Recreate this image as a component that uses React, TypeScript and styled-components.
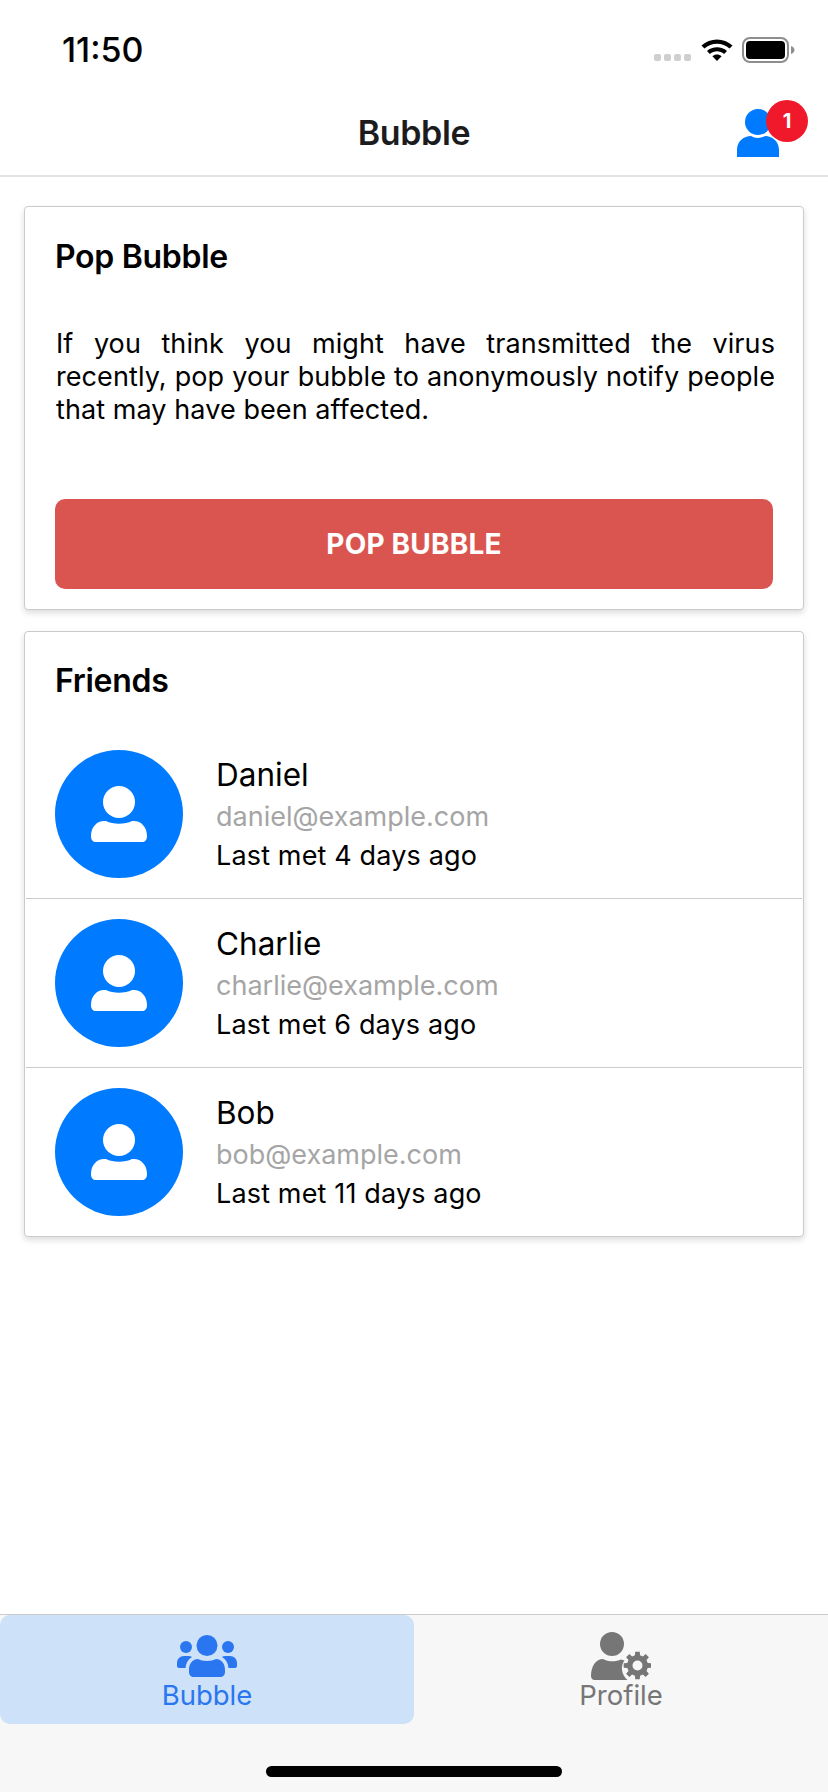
import styled, { createGlobalStyle } from 'styled-components';

const GlobalStyle = createGlobalStyle`
  html, body {
    margin: 0;
    padding: 0;
    background: #fff;
    font-family: Inter, "Noto Sans", "Liberation Sans", sans-serif;
  }
  * { box-sizing: border-box; }
`;

const Screen = styled.div`
  width: 828px;
  height: 1792px;
  display: flex;
  flex-direction: column;
  overflow: hidden;
  background: #fff;
`;

const StatusBar = styled.div`
  height: 88px;
  padding: 31px 32px 0 62px;
  display: flex;
  justify-content: space-between;
  align-items: flex-start;
`;

const Time = styled.div`
  font-size: 34px;
  line-height: 38px;
  font-weight: 500;
  color: #000;
`;

const StatusIcons = styled.div`
  margin-top: 6px;
  display: flex;
  align-items: flex-start;
`;

const SignalDots = styled.div`
  display: flex;
  gap: 3px;
  margin: 17px 10px 0 0;
`;

const SignalDot = styled.span`
  width: 7px;
  height: 7px;
  border-radius: 2px;
  background: #cfcfcf;
`;

const Header = styled.header`
  position: relative;
  height: 89px;
  display: flex;
  align-items: center;
  justify-content: center;
  border-bottom: 2px solid #e2e2e2;
`;

const Title = styled.h1`
  margin: 0 0 -2px;
  font-size: 34px;
  line-height: 40px;
  font-weight: 600;
  color: #1c1c1e;
  letter-spacing: -0.4px;
`;

const HeaderAction = styled.div`
  position: absolute;
  left: 737px;
  top: 21px;
  width: 42px;
  height: 48px;
`;

const Badge = styled.span`
  position: absolute;
  left: 29px;
  top: -9px;
  width: 42px;
  height: 42px;
  border-radius: 50%;
  background: #f0192b;
  color: #fff;
  font-size: 20px;
  font-weight: 700;
  display: flex;
  align-items: center;
  justify-content: center;
`;

const Main = styled.main`
  flex: 1;
  padding: 29px 24px 0;
  display: flex;
  flex-direction: column;
  gap: 21px;
`;

const Card = styled.section`
  border: 1px solid #cbcbcb;
  border-radius: 4px;
  background: #fff;
  box-shadow: 0 3px 6px rgba(0, 0, 0, 0.14);
`;

const PopBody = styled.div`
  height: 402px;
  padding: 32px 30px 0;
  display: flex;
  flex-direction: column;
`;

const CardTitle = styled.h2`
  margin: 0;
  font-size: 32px;
  line-height: 36px;
  font-weight: 600;
  color: #000;
  letter-spacing: -0.3px;
`;

const Description = styled.p`
  margin: 52px -2px 0 1px;
  font-size: 27px;
  line-height: 33px;
  letter-spacing: 0.08px;
  color: #000;
  text-align: justify;
`;

const PopButton = styled.button`
  margin-top: 73px;
  height: 90px;
  border: 0;
  border-radius: 10px;
  background: #da5550;
  color: #fff;
  font-family: inherit;
  font-size: 28px;
  font-weight: 700;
  letter-spacing: 0.2px;
`;

const FriendsHeading = styled.div`
  padding: 31px 30px 0;
  height: 98px;
`;

const FriendRow = styled.div<{ $last?: boolean }>`
  height: ${(p) => (p.$last ? 168 : 169)}px;
  margin: 0 1px;
  padding: 0 29px;
  display: flex;
  align-items: center;
  gap: 33px;
  border-bottom: ${(p) => (p.$last ? 'none' : '1px solid #cbcbcb')};
`;

const Avatar = styled.div`
  width: 128px;
  height: 128px;
  border-radius: 50%;
  background: #007bff;
  display: flex;
  align-items: center;
  justify-content: center;
  flex: none;
`;

const FriendInfo = styled.div`
  display: flex;
  flex-direction: column;
`;

const FriendName = styled.div`
  font-size: 31.5px;
  line-height: 42px;
  color: #000;
`;

const FriendEmail = styled.div`
  font-size: 27px;
  line-height: 42px;
  color: #a5a5a5;
`;

const FriendMet = styled.div`
  font-size: 27px;
  line-height: 36px;
  letter-spacing: 0.15px;
  color: #000;
`;

const TabBar = styled.nav`
  height: 178px;
  background: #f7f7f7;
  border-top: 1px solid #cbcbcb;
  display: flex;
  align-items: flex-start;
  position: relative;
`;

const Tab = styled.div<{ $active?: boolean }>`
  width: 414px;
  height: 109px;
  border-radius: 10px;
  display: flex;
  flex-direction: column;
  align-items: center;
  justify-content: flex-end;
  padding-bottom: 14px;
  background: ${(p) => (p.$active ? '#cde1f9' : 'transparent')};
  color: ${(p) => (p.$active ? '#2a76f0' : '#767676')};
`;

const TabIcon = styled.div<{ $gap: number }>`
  display: flex;
  margin-bottom: ${(p) => p.$gap}px;
`;

const TabLabel = styled.span`
  font-size: 27.5px;
  line-height: 30px;
`;

const HomeIndicator = styled.div`
  position: absolute;
  left: 266px;
  top: 151px;
  width: 296px;
  height: 11px;
  border-radius: 6px;
  background: #000;
`;

const friends = [
  { name: 'Daniel', email: 'daniel@example.com', met: 'Last met 4 days ago' },
  { name: 'Charlie', email: 'charlie@example.com', met: 'Last met 6 days ago' },
  { name: 'Bob', email: 'bob@example.com', met: 'Last met 11 days ago' },
];

const WifiIcon = () => (
  <svg width="32" height="24" viewBox="0 0 32 24">
    <path d="M0.5 8.5 C9 0.5 23 0.5 31.5 8.5 L28.6 11.6 C21.5 5 10.5 5 3.4 11.6 Z" fill="#000" />
    <path d="M6 14 C11.5 9 20.5 9 26 14 L23.1 17 C19 13.4 13 13.4 8.9 17 Z" fill="#000" />
    <path d="M11.4 19.2 C14 17 18 17 20.6 19.2 L16 24 Z" fill="#000" />
  </svg>
);

const BatteryIcon = () => (
  <svg width="54" height="26" viewBox="0 0 54 26" style={{ marginLeft: 9 }}>
    <rect x="1" y="1" width="45" height="24" rx="7" fill="none" stroke="#8e8e8e" strokeWidth="2" />
    <rect x="4" y="4" width="39" height="18" rx="4" fill="#000" />
    <path d="M49 9 C51.5 10 52.5 11.5 52.5 13 C52.5 14.5 51.5 16 49 17 Z" fill="#8e8e8e" />
  </svg>
);

const PersonIcon = () => (
  <svg width="42" height="48" viewBox="0 0 42 48">
    <circle cx="21" cy="13" r="13" fill="#007bff" />
    <path d="M0 48 V41 C0 32 7 27 14 27 C18 29.5 24 29.5 28 27 C35 27 42 32 42 41 V48 Z" fill="#007bff" />
  </svg>
);

const AvatarPerson = () => (
  <svg width="56" height="56" viewBox="0 0 56 56">
    <circle cx="28" cy="16" r="16" fill="#fff" />
    <path d="M0 50 C0 41 6 35 13 35 H15 C22 38.5 34 38.5 41 35 H43 C50 35 56 41 56 50 C56 54 54 56 51 56 H5 C2 56 0 54 0 50 Z" fill="#fff" />
  </svg>
);

const UsersIcon = () => (
  <svg width="60" height="42" viewBox="0 0 60 42" fill="#2a76f0">
    <circle cx="30" cy="10.5" r="10.5" />
    <circle cx="9" cy="12" r="6" />
    <circle cx="51" cy="12" r="6" />
    <path d="M12 35 C12 28 16 24 21 24 C25 26.5 35 26.5 39 24 C44 24 48 28 48 35 V37 C48 40 46 42 43 42 H17 C14 42 12 40 12 37 Z" />
    <path d="M0 31 V28 C0 24 3 21 7 21 H12 C13.5 21 15 22 15 22 C11 24.5 9 28 8.5 33 H2 C1 33 0 32 0 31 Z" />
    <path d="M60 31 V28 C60 24 57 21 53 21 H48 C46.5 21 45 22 45 22 C49 24.5 51 28 51.5 33 H58 C59 33 60 32 60 31 Z" />
  </svg>
);

const gearPath = () => {
  const cx = 46.5;
  const cy = 33.5;
  const teeth = 8;
  const points: string[] = [];
  for (let i = 0; i < teeth; i++) {
    const a = (i / teeth) * Math.PI * 2 - Math.PI / 2;
    const step = Math.PI / teeth;
    [
      [a - step * 0.42, 14],
      [a + step * 0.42, 14],
      [a + step * 0.62, 10.5],
      [a + step * 1.38, 10.5],
    ].forEach(([t, r]) => {
      points.push(`${(cx + Math.cos(t) * r).toFixed(2)} ${(cy + Math.sin(t) * r).toFixed(2)}`);
    });
  }
  const hole = `M${cx} ${cy - 5} A5 5 0 1 0 ${cx} ${cy + 5} A5 5 0 1 0 ${cx} ${cy - 5} Z`;
  return `M${points.join(' L')} Z ${hole}`;
};

const ProfileGearIcon = () => (
  <svg width="60" height="48" viewBox="0 0 60 48" fill="#767676">
    <circle cx="21" cy="12" r="12" />
    <path d="M0 44 C0 34 5 27 12 27 C17 30 25 30 30 27.5 L33.5 28.5 C31.5 31 30.5 35 31 38 C31.5 42 33.5 45.5 36.5 48 H4 C1 48 0 46 0 44 Z" />
    <path fillRule="evenodd" d={gearPath()} />
  </svg>
);

export default function App() {
  return (
    <Screen>
      <GlobalStyle />
      <StatusBar>
        <Time>11:50</Time>
        <StatusIcons>
          <SignalDots>
            <SignalDot />
            <SignalDot />
            <SignalDot />
            <SignalDot />
          </SignalDots>
          <WifiIcon />
          <BatteryIcon />
        </StatusIcons>
      </StatusBar>
      <Header>
        <Title>Bubble</Title>
        <HeaderAction>
          <PersonIcon />
          <Badge>1</Badge>
        </HeaderAction>
      </Header>
      <Main>
        <Card>
          <PopBody>
            <CardTitle>Pop Bubble</CardTitle>
            <Description>
              If you think you might have transmitted the virus recently, pop your bubble to
              anonymously notify people that may have been affected.
            </Description>
            <PopButton>POP BUBBLE</PopButton>
          </PopBody>
        </Card>
        <Card>
          <FriendsHeading>
            <CardTitle>Friends</CardTitle>
          </FriendsHeading>
          {friends.map((f, i) => (
            <FriendRow key={f.email} $last={i === friends.length - 1}>
              <Avatar>
                <AvatarPerson />
              </Avatar>
              <FriendInfo>
                <FriendName>{f.name}</FriendName>
                <FriendEmail>{f.email}</FriendEmail>
                <FriendMet>{f.met}</FriendMet>
              </FriendInfo>
            </FriendRow>
          ))}
        </Card>
      </Main>
      <TabBar>
        <Tab $active>
          <TabIcon $gap={3}>
            <UsersIcon />
          </TabIcon>
          <TabLabel>Bubble</TabLabel>
        </Tab>
        <Tab>
          <TabIcon $gap={0}>
            <ProfileGearIcon />
          </TabIcon>
          <TabLabel>Profile</TabLabel>
        </Tab>
        <HomeIndicator />
      </TabBar>
    </Screen>
  );
}
